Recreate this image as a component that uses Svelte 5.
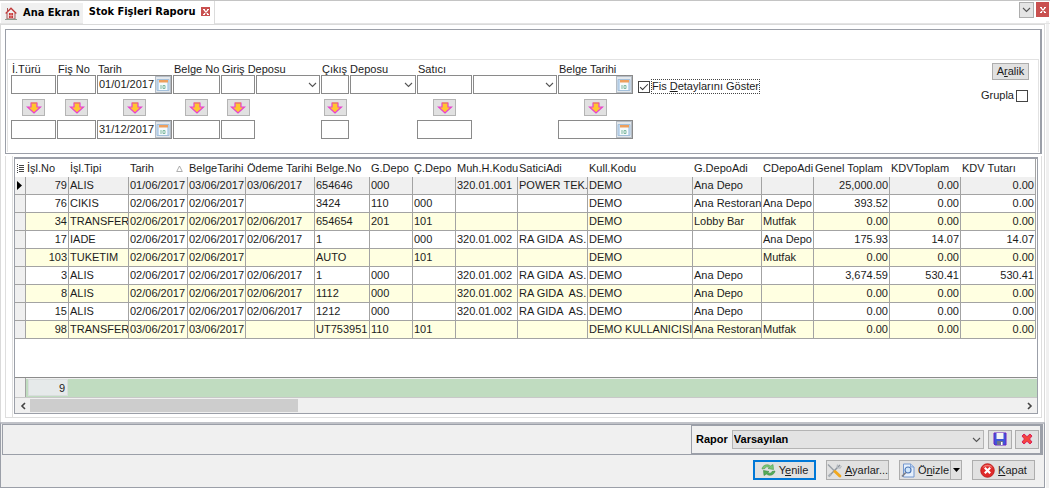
<script lang="ts">
  interface Column {
    title: string;
    width: number;
    numeric?: boolean;
    sorted?: boolean;
  }

  interface Filter {
    label: string;
    date?: boolean;
    list?: boolean;
    from?: string;
    to?: string;
  }

  const filters: Filter[] = [
    { label: "İ.Türü" },
    { label: "Fiş No" },
    { label: "Tarih", date: true, from: "01/01/2017", to: "31/12/2017" },
    { label: "Belge No" },
    { label: "Giriş Deposu", list: true },
    { label: "Çıkış Deposu", list: true },
    { label: "Satıcı", list: true },
    { label: "Belge Tarihi", date: true },
  ];

  const columns: Column[] = [
    { title: "İşl.No", width: 43, numeric: true },
    { title: "İşl.Tipi", width: 60 },
    { title: "Tarih", width: 59, sorted: true },
    { title: "BelgeTarihi", width: 58 },
    { title: "Ödeme Tarihi", width: 69 },
    { title: "Belge.No", width: 55 },
    { title: "G.Depo", width: 43 },
    { title: "Ç.Depo", width: 43 },
    { title: "Muh.H.Kodu", width: 62 },
    { title: "SaticiAdi", width: 70 },
    { title: "Kull.Kodu", width: 105 },
    { title: "G.DepoAdi", width: 69 },
    { title: "CDepoAdi", width: 52 },
    { title: "Genel Toplam", width: 76, numeric: true },
    { title: "KDVToplam", width: 71, numeric: true },
    { title: "KDV Tutarı", width: 75, numeric: true },
  ];

  const rows: string[][] = [
    ["79", "ALIS", "01/06/2017", "03/06/2017", "03/06/2017", "654646", "000", "", "320.01.001", "POWER TEK.", "DEMO", "Ana Depo", "", "25,000.00", "0.00", "0.00"],
    ["76", "CIKIS", "02/06/2017", "02/06/2017", "", "3424", "110", "000", "", "", "DEMO", "Ana Restoran", "Ana Depo", "393.52", "0.00", "0.00"],
    ["34", "TRANSFER", "02/06/2017", "02/06/2017", "02/06/2017", "654654", "201", "101", "", "", "DEMO", "Lobby Bar", "Mutfak", "0.00", "0.00", "0.00"],
    ["17", "IADE", "02/06/2017", "02/06/2017", "02/06/2017", "1", "", "000", "320.01.002", "RA GIDA  AS.", "DEMO", "", "Ana Depo", "175.93", "14.07", "14.07"],
    ["103", "TUKETIM", "02/06/2017", "02/06/2017", "", "AUTO", "", "101", "", "", "DEMO", "", "Mutfak", "0.00", "0.00", "0.00"],
    ["3", "ALIS", "02/06/2017", "02/06/2017", "02/06/2017", "1", "000", "", "320.01.002", "RA GIDA  AS.", "DEMO", "Ana Depo", "", "3,674.59", "530.41", "530.41"],
    ["8", "ALIS", "02/06/2017", "02/06/2017", "02/06/2017", "1112", "000", "", "320.01.002", "RA GIDA  AS.", "DEMO", "Ana Depo", "", "0.00", "0.00", "0.00"],
    ["15", "ALIS", "02/06/2017", "02/06/2017", "02/06/2017", "1212", "000", "", "320.01.002", "RA GIDA  AS.", "DEMO", "Ana Depo", "", "0.00", "0.00", "0.00"],
    ["98", "TRANSFER", "03/06/2017", "03/06/2017", "", "UT753951", "110", "101", "", "", "DEMO KULLANICISI", "Ana Restoran", "Mutfak", "0.00", "0.00", "0.00"],
  ];

  let selected = $state(0);
  let showDetails = $state(true);
  let grouped = $state(false);
</script>

{#snippet chevron()}
  <svg class="chevron" width="9" height="6" viewBox="0 0 9 6" aria-hidden="true">
    <path d="M1 1l3.500 3.500L8 1" fill="none" stroke="#555" stroke-width="1.100" />
  </svg>
{/snippet}

{#snippet calendar()}
  <svg width="14" height="14" viewBox="0 0 14 14" aria-hidden="true">
    <path d="M1 1.500h12v11H1z" fill="#c3d9ee" stroke="#a3c0dc" />
    <path d="M3 4h8v8H3z" fill="#f5fafc" />
    <path d="M3 2h9v2.500H3z" fill="#ee9f5c" />
    <path d="M5 7v4M7 7.500h2v3H7z" fill="none" stroke="#7fb9a0" />
  </svg>
{/snippet}

{#snippet cross()}
  <svg width="6" height="6" viewBox="0 0 6 6" aria-hidden="true">
    <path d="M1 1l4 4M5 1L1 5M0 .5h2M4 .5h2M0 5.500h2M4 5.500h2" stroke="#fff" stroke-width="1.100" />
  </svg>
{/snippet}

{#snippet field(f: Filter, value: string, label: string)}
  <span class="field">
    <input type="text" {value} aria-label={label} />
    {#if f.date}
      <button class="pick" aria-label="{label} takvim">{@render calendar()}</button>
    {/if}
  </span>
{/snippet}

<div class="window">
  <header class="tabs">
    <a class="tab" href="#ana">
      <svg width="12" height="13" viewBox="0 0 12 13" aria-hidden="true">
        <path d="M2 6v6h8V6" fill="#f2dddd" stroke="#9b5c5c" />
        <path d="M.7 6.500L6 1.200l5.300 5.300" fill="none" stroke="#c23b3b" stroke-width="1.400" />
        <path d="M2.500 1v3" stroke="#a55" />
        <path d="M4 6h4v5H4z" fill="#c83a3a" />
        <path d="M6 6v5M4 8.500h4" stroke="#f6c8c8" stroke-width=".6" />
        <path d="M0 12.500h12" stroke="#8b9a8b" />
      </svg>
      Ana Ekran
    </a>
    <div class="tab active">
      <a href="#stok">Stok Fişleri Raporu</a>
      <button class="close small" aria-label="Sekmeyi kapat">{@render cross()}</button>
    </div>
    <div class="tab-tools">
      <button class="tab-list" aria-label="Sekmeler">{@render chevron()}</button>
      <button class="close" aria-label="Kapat">{@render cross()}</button>
    </div>
  </header>

  <main class="page">
    <section class="filter-panel">
      <div class="filters">
        <div class="ranges">
          {#each filters as f, i}
            <div class="range range-{i}">
              <span class="caption">{f.label}</span>
              {@render field(f, f.from ?? "", f.label)}
              <button class="copy" aria-label="{f.label} kopyala">
                <svg width="16" height="12" viewBox="0 0 16 12" aria-hidden="true">
                  <path d="M5 1h6v4h3.500L8 11 1.500 5H5z" fill="#ffc62e" stroke="#e83fd0" stroke-width="1.200" />
                  <path d="M5 1h6" stroke="#f08a3a" />
                </svg>
              </button>
              {@render field(f, f.to ?? "", `${f.label} bitiş`)}
              {#if f.list}
                <span class="combo">
                  <select aria-label="{f.label} listesi"><option></option></select>
                  {@render chevron()}
                </span>
              {/if}
            </div>
          {/each}
        </div>

        <label class="check details">
          <input type="checkbox" bind:checked={showDetails} />
          <span>Fis <u>D</u>etaylarını Göster</span>
        </label>

        <div class="side">
          <button class="btn"><span>A<u>r</u>alik</span></button>
          <label class="check">
            <span>Grupla</span>
            <input type="checkbox" bind:checked={grouped} />
          </label>
        </div>
      </div>
    </section>

    <section class="grid-panel">
      <div class="grid">
        <div class="grid-body">
          <table>
            <colgroup>
              <col class="mark-col" />
              {#each columns as c}
                <col style="width: {c.width}px" />
              {/each}
            </colgroup>
            <thead>
              <tr>
                <th class="mark">
                  <svg width="7" height="9" viewBox="0 0 7 9" aria-hidden="true">
                    <path d="M2 1.500h5M2 3.500h5M2 5.500h5M2 7.500h5M0 .5h1M0 2.500h1M0 4.500h1M0 6.500h1M0 8.500h1" stroke="#444" />
                  </svg>
                </th>
                {#each columns as c}
                  <th>
                    {c.title}
                    {#if c.sorted}
                      <svg class="sort" width="7" height="7" viewBox="0 0 7 7" aria-hidden="true">
                        <path d="M3.500 1L6.300 6.500H.7z" fill="#fff" stroke="#999" stroke-width=".8" />
                      </svg>
                    {/if}
                  </th>
                {/each}
              </tr>
            </thead>
            <tbody>
              {#each rows as row, r}
                <tr class:selected={r === selected} onclick={() => (selected = r)}>
                  <td class="mark">
                    {#if r === selected}
                      <svg width="5" height="9" viewBox="0 0 5 9" aria-hidden="true">
                        <path d="M0 0l5 4.500L0 9z" />
                      </svg>
                    {/if}
                  </td>
                  {#each row as cell, i}
                    <td class:num={columns[i].numeric}>{cell}</td>
                  {/each}
                </tr>
              {/each}
            </tbody>
          </table>
        </div>

        <div class="summary">
          <span class="summary-mark"></span>
          <div class="summary-bar"><span class="count">{rows.length}</span></div>
        </div>

        <div class="scroll">
          <button aria-label="Sola kaydır">
            <svg width="6" height="8" viewBox="0 0 6 8" aria-hidden="true">
              <path d="M5 1L2 4l3 3" fill="none" stroke="#444" stroke-width="1.600" />
            </svg>
          </button>
          <div class="track"><div class="thumb"></div></div>
          <button aria-label="Sağa kaydır">
            <svg width="6" height="8" viewBox="0 0 6 8" aria-hidden="true">
              <path d="M1 1l3 3-3 3" fill="none" stroke="#444" stroke-width="1.600" />
            </svg>
          </button>
        </div>
      </div>
    </section>
  </main>

  <footer class="bottom">
    <div class="report-row">
      <div class="report">
        <label for="report">Rapor</label>
        <span class="combo report-combo">
          <select id="report"><option>Varsayılan</option></select>
          {@render chevron()}
        </span>
        <button class="btn icon" aria-label="Kaydet">
          <svg width="14" height="14" viewBox="0 0 14 14" aria-hidden="true">
            <path d="M1 1h12v12H2l-1-1z" fill="#3f55d8" stroke="#6a21c4" />
            <path d="M3.500 1h7v6h-7z" fill="#f4f4f4" />
            <path d="M4 9h6v4H4z" fill="#6c7389" />
            <path d="M8 10h1.500v3H8z" fill="#fff" />
          </svg>
        </button>
        <button class="btn icon" aria-label="Sil">
          <svg width="12" height="12" viewBox="0 0 12 12" aria-hidden="true">
            <path d="M1 3l2-2 3 2.700L9 1l2 2-2.500 3L11 9l-2 2-3-2.700L3 11 1 9l2.500-3z" fill="#f4453c" stroke="#d91f5a" />
          </svg>
        </button>
      </div>
    </div>

    <div class="actions">
      <button class="btn default">
        <svg width="15" height="14" viewBox="0 0 15 14" aria-hidden="true">
          <path d="M1 6C1.500 2 6.500.5 9.500 3L12 1.500 12.500 6.500 7 5.500l1.500-1C6.500 3.500 4.500 3.500 4 5.500z" fill="#7cc878" stroke="#4b9a50" stroke-width=".6" />
          <path d="M14 8c-.5 4-5.500 5.500-8.500 3L3 12.500 2.500 7.500 8 8.500l-1.500 1c2 1 4 1 4.500-1z" fill="#55ab58" stroke="#3b8a43" stroke-width=".6" />
        </svg>
        <span>Y<u>e</u>nile</span>
      </button>
      <button class="btn">
        <svg width="15" height="15" viewBox="0 0 15 15" aria-hidden="true">
          <path d="M13 2L3 12" stroke="#8d949c" stroke-width="1.500" />
          <path d="M10.500 1.500l-.5 3 3 .5 1.500-2" fill="none" stroke="#b3b9c0" stroke-width="1.200" />
          <path d="M1 1.500L7.500 8" stroke="#9aa1a8" stroke-width="1.500" />
          <path d="M8 8.500l4.800 4.500" stroke="#f2a81d" stroke-width="3" stroke-linecap="round" />
          <path d="M1.500 13.500L4 11" stroke="#a9afb5" stroke-width="2.400" />
        </svg>
        <span><u>A</u>yarlar...</span>
      </button>
      <div class="split">
        <button class="btn">
          <svg width="14" height="15" viewBox="0 0 14 15" aria-hidden="true">
            <path d="M2.500 1h7L13 4v10H2.500z" fill="#e6f0fc" stroke="#7297cf" />
            <path d="M9.500 1v3H13" fill="#bcd3f2" stroke="#7297cf" stroke-width=".8" />
            <circle cx="7" cy="7" r="3" fill="#cfe6fb" stroke="#4f79b8" stroke-width="1.200" />
            <path d="M4.800 9.500L1 13.500" stroke="#7b7f8a" stroke-width="1.800" />
          </svg>
          <span>Ö<u>n</u>izle</span>
        </button>
        <button class="btn drop" aria-label="Önizle seçenekleri">
          <svg width="7" height="4" viewBox="0 0 7 4" aria-hidden="true"><path d="M0 0h7L3.500 4z" /></svg>
        </button>
      </div>
      <button class="btn">
        <svg width="15" height="15" viewBox="0 0 15 15" aria-hidden="true">
          <circle cx="7.500" cy="7.500" r="6.800" fill="#e02a2a" stroke="#b81616" stroke-width=".8" />
          <path d="M2.500 5a5.500 5.500 0 0 1 10 0 9 9 0 0 0-10 0z" fill="#f27a73" />
          <path d="M4.800 4.800l5.400 5.400M10.200 4.800l-5.400 5.400" stroke="#fff" stroke-width="2.200" />
        </svg>
        <span><u>K</u>apat</span>
      </button>
    </div>
  </footer>
</div>

<style>
  :global(body) {
    background: #fff;
  }

  .window,
  .window * {
    box-sizing: border-box;
  }

  .window {
    border-top: 1px solid #c4c4c4;
    padding-right: 5px;
    background: linear-gradient(#f0f0f0, #f0f0f0) right 1px bottom 0 / 3px calc(100% - 20px) no-repeat;
    font: 11px/13px "Liberation Sans", Arial, sans-serif;
    color: #1c1c1c;
  }

  button,
  input,
  select {
    margin: 0;
    padding: 0;
    border: 0;
    border-radius: 0;
    background: none;
    font: inherit;
    color: inherit;
  }

  svg {
    display: block;
    flex: none;
  }

  a {
    color: inherit;
    text-decoration: none;
  }

  /* tabs */
  .tabs {
    display: flex;
    height: 23px;
    margin-right: -5px;
    padding: 0 1px;
    border-bottom: 1px solid #e4e4e4;
    font: bold 11px/16px "DejaVu Sans Condensed", Tahoma, sans-serif;
    color: #000;
  }

  .tab {
    display: flex;
    align-items: center;
    gap: 6px;
    margin-top: 2px;
    padding: 0 3px 0 4px;
    background: #f0f0f0;
  }

  .tab.active {
    margin: 0 0 -1px;
    padding: 0 4px 2px 6px;
    border-right: 1px solid #dcdcdc;
    background: #fff;
  }

  .tab-tools {
    display: flex;
    gap: 2px;
    margin: 1px 0 0 auto;
  }

  .close {
    display: flex;
    align-items: center;
    justify-content: center;
    width: 13px;
    height: 15px;
    background: #c9504f;
  }

  .close.small {
    width: 9px;
    height: 9px;
  }

  .tab-list {
    display: flex;
    align-items: center;
    justify-content: center;
    width: 15px;
    height: 16px;
    border: 1px solid #adadad;
    background: #e4e4e4;
  }

  /* page */
  .page {
    padding: 4px 2px 4px 4px;
    border: 1px solid #dadada;
    border-width: 1px 1px 0;
    background: #fff;
  }

  .filter-panel {
    padding: 29px 1px 1px;
    border: 1px solid #9b9fa8;
    border-right-width: 2px;
  }

  .filters {
    display: flex;
    align-items: flex-start;
    min-height: 93px;
    padding: 3px 9px 0 3px;
    border: 1px solid #e2e2e2;
    border-bottom: 0;
  }

  .ranges {
    display: flex;
    gap: 1px;
  }

  .range {
    display: grid;
    grid-template-rows: 12px 20px 25px 19px;
    column-gap: 1px;
  }

  .range-0 { grid-template-columns: 45px; }
  .range-1 { grid-template-columns: 39px; }
  .range-2,
  .range-7 { grid-template-columns: 75px; }
  .range-3 { grid-template-columns: 47px; }
  .range-4 { grid-template-columns: 34px 64px; }
  .range-5 { grid-template-columns: 28px 66px; }
  .range-6 { grid-template-columns: 55px 84px; }

  .caption {
    grid-column: 1 / -1;
    padding-left: 1px;
    line-height: 13px;
    white-space: nowrap;
  }

  .field {
    grid-column: 1;
    display: flex;
    height: 19px;
    border: 1px solid #8a8a8a;
    background: #fff;
  }

  .field input {
    flex: 1;
    min-width: 0;
    width: 0;
    padding-left: 1px;
  }

  .pick {
    display: flex;
    align-items: center;
    justify-content: center;
    width: 16px;
    border: 1px solid #b5bcc4;
    background: #e4e8ec;
  }

  .copy {
    grid-column: 1;
    display: flex;
    align-items: center;
    justify-content: center;
    align-self: center;
    justify-self: center;
    width: 23px;
    height: 17px;
    border: 1px solid #b4b4b4;
    background: #e1e1e1;
  }

  .combo {
    position: relative;
    grid-column: 2;
    grid-row: 2;
    height: 19px;
  }

  .combo select {
    appearance: none;
    width: 100%;
    height: 100%;
    border: 1px solid #8a8a8a;
    background: #fff;
  }

  .combo .chevron {
    position: absolute;
    top: 7px;
    right: 3px;
    pointer-events: none;
  }

  .check {
    display: flex;
    align-items: center;
    gap: 2px;
  }

  .check input {
    appearance: none;
    width: 12px;
    height: 12px;
    border: 1px solid #444;
    background: #fff;
  }

  .check input:checked::after {
    content: "";
    display: block;
    width: 7px;
    height: 3px;
    margin: 2px 1px;
    border: solid #333;
    border-width: 0 0 1px 1px;
    transform: rotate(-45deg);
  }

  .details {
    margin: 17px 0 0 5px;
  }

  .details span {
    outline: 1px dotted #444;
  }

  .side {
    display: flex;
    flex-direction: column;
    align-items: flex-end;
    gap: 9px;
    margin-left: auto;
  }

  .side .btn {
    width: 37px;
    height: 17px;
  }

  .side .check {
    margin-right: 1px;
  }

  .btn {
    display: flex;
    align-items: center;
    justify-content: center;
    gap: 3px;
    border: 1px solid #adadad;
    background: #e1e1e1;
    white-space: nowrap;
  }

  /* grid */
  .grid-panel {
    margin-top: 2px;
    padding: 1px 3px 3px 8px;
    border: 1px solid #dedede;
    border-top: 0;
    background: linear-gradient(#dedede, #dedede) 6px 0 / 1px 100% no-repeat;
  }

  .grid {
    border: 1px solid #9b9fa8;
    border-top-width: 2px;
    background: #fff;
  }

  .grid-body {
    min-height: 219px;
    overflow: hidden;
    border-bottom: 1px solid #8c8c8c;
  }

  table {
    width: 1021px;
    table-layout: fixed;
    border-collapse: separate;
    border-spacing: 0;
  }

  .mark-col {
    width: 11px;
  }

  th,
  td {
    height: 18px;
    padding: 0 0 0 1px;
    overflow: hidden;
    text-align: left;
    font-weight: normal;
    white-space: pre;
  }

  th {
    position: relative;
    white-space: nowrap;
  }

  td {
    border: solid #a3a3a3;
    border-width: 0 1px 1px 0;
  }

  th:last-child {
    border-right: 1px solid #a3a3a3;
  }

  .mark {
    padding-left: 2px;
  }

  .num {
    padding-right: 1px;
    text-align: right;
  }

  tbody tr:nth-child(2n + 3) td {
    background: #ffffe1;
  }

  tbody tr.selected td,
  tbody tr td.mark {
    background: #f0f0f0;
  }

  .sort {
    position: absolute;
    top: 6px;
    right: 5px;
  }

  .summary {
    display: flex;
    height: 20px;
    border-bottom: 1px solid #c8c8c8;
    background: #f0f0f0;
  }

  .summary-mark {
    width: 11px;
    border-right: 1px solid #a3a3a3;
  }

  .summary-bar {
    flex: 1;
    margin-top: 1px;
    padding-left: 2px;
    background: #c0dcc0;
  }

  .count {
    display: block;
    width: 40px;
    height: 17px;
    padding-right: 2px;
    border: 1px solid #d9dddd;
    background: #e6eaea;
    line-height: 16px;
    text-align: right;
  }

  .scroll {
    display: flex;
    height: 15px;
    background: #f0f0f0;
  }

  .scroll button {
    display: flex;
    align-items: center;
    justify-content: center;
    width: 15px;
  }

  .track {
    flex: 1;
    padding: 1px 0;
  }

  .thumb {
    width: 27%;
    height: 13px;
    background: #cdcdcd;
  }

  /* bottom */
  .bottom {
    border: 1px solid #9b9fa8;
    border-top: 2px solid #c0c2c8;
    background: #f0f0f0;
  }

  .report-row {
    display: flex;
    justify-content: flex-end;
    margin: 0 1px;
    border: 1px solid #9b9fa8;
    border-right-width: 2px;
  }

  .report {
    display: flex;
    align-items: center;
    width: 350px;
    height: 29px;
    padding: 0 1px 1px 4px;
    border: 1px solid #9b9fa8;
    font-weight: bold;
    color: #000;
  }

  .report-combo {
    flex: 1;
    margin: 0 4px;
  }

  .report-combo select {
    padding-left: 1px;
    border-color: #b4b4b4;
    background: #e3e3e3;
  }

  .icon {
    width: 24px;
    height: 19px;
  }

  .icon + .icon {
    margin-left: 3px;
  }

  .actions {
    display: flex;
    justify-content: flex-end;
    gap: 10px;
    padding: 5px 9px 7px;
  }

  .actions .btn {
    width: 63px;
    height: 20px;
  }

  .actions .default {
    border: 2px solid #0078d7;
  }

  .split {
    display: flex;
  }

  .actions .split .btn {
    width: 52px;
  }

  .actions .split .drop {
    width: 12px;
    margin-left: -1px;
  }
</style>
